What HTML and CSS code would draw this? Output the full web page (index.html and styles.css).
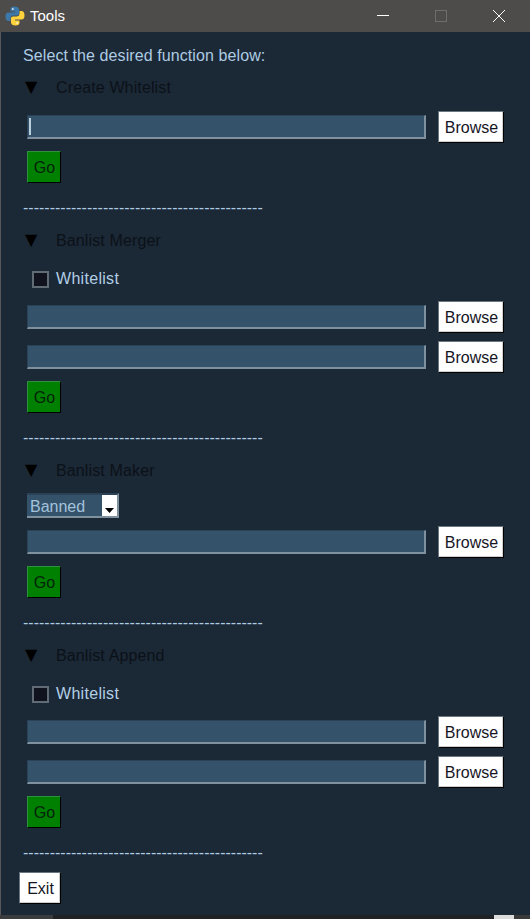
FILE: index.html
```html
<!DOCTYPE html>
<html lang="en">
<head>
<meta charset="utf-8">
<title>Tools</title>
<link rel="stylesheet" href="styles.css">
</head>
<body>
<div class="window">
  <header class="titlebar">
    <svg class="app-icon" width="20" height="20" viewBox="0 0 20 20">
      <path fill="#3c78aa" d="M9.5 0.5C6.5 0.5 5.5 1.8 5.5 3.5V5.5H10V6.5H3.5C1.5 6.5 0.5 8 0.5 10.5S1.5 15 3.5 15H5.5V12.5C5.5 10.8 6.8 9.5 8.5 9.5H12C13.2 9.5 14 8.6 14 7.5V3.5C14 1.5 12 0.5 9.5 0.5Z"/>
      <path fill="#fdd23c" d="M10.5 19.5C13.5 19.5 14.5 18.2 14.5 16.5V14.5H10V13.5H16.5C18.5 13.5 19.5 12 19.5 9.5S18.5 5 16.5 5H14.5V7.5C14.5 9.2 13.2 10.5 11.5 10.5H8C6.800 10.500 6 11.400 6 12.500V16.500C6 18.500 8 19.500 10.500 19.500Z"/>
      <circle cx="7.800" cy="3" r="1" fill="#d8e4ee"/>
      <circle cx="12.200" cy="17" r="1" fill="#fff3c4"/>
    </svg>
    <span class="title">Tools</span>
    <div class="controls">
      <svg class="ctl" width="58" height="32" viewBox="0 0 58 32"><path d="M23 15.500H35" stroke="#fff" fill="none"/></svg>
      <svg class="ctl" width="58" height="32" viewBox="0 0 58 32"><rect x="23.500" y="10.500" width="11" height="11" stroke="#6f6d6b" fill="none"/></svg>
      <svg class="ctl" width="58" height="32" viewBox="0 0 58 32"><path d="M23 10L35 22M35 10L23 22" stroke="#fff" fill="none"/></svg>
    </div>
  </header>
  <main class="content">
    <p class="intro">Select the desired function below:</p>

    <section class="section">
      <h2 class="heading"><span class="arrow">▼</span>Create Whitelist</h2>
      <div class="row top-13"><div class="entry"><span class="caret"></span></div><button class="btn">Browse</button></div>
      <button class="btn go">Go</button>
    </section>
    <div class="sep">---------------------------------------------</div>

    <section class="section">
      <h2 class="heading"><span class="arrow">▼</span>Banlist Merger</h2>
      <label class="check top-17"><span class="box"></span>Whitelist</label>
      <div class="row"><div class="entry"></div><button class="btn">Browse</button></div>
      <div class="row"><div class="entry"></div><button class="btn">Browse</button></div>
      <button class="btn go">Go</button>
    </section>
    <div class="sep">---------------------------------------------</div>

    <section class="section">
      <h2 class="heading"><span class="arrow">▼</span>Banlist Maker</h2>
      <div class="select top-12"><span class="select-text">Banned</span><span class="select-btn"><svg width="9" height="5" viewBox="0 0 9 5"><path d="M0 0H9L4.500 5Z" fill="#000"/></svg></span></div>
      <div class="row"><div class="entry"></div><button class="btn">Browse</button></div>
      <button class="btn go">Go</button>
    </section>
    <div class="sep">---------------------------------------------</div>

    <section class="section">
      <h2 class="heading"><span class="arrow">▼</span>Banlist Append</h2>
      <label class="check top-17"><span class="box"></span>Whitelist</label>
      <div class="row"><div class="entry"></div><button class="btn">Browse</button></div>
      <div class="row"><div class="entry"></div><button class="btn">Browse</button></div>
      <button class="btn go">Go</button>
    </section>
    <div class="sep">---------------------------------------------</div>

    <button class="btn exit">Exit</button>
  </main>
  <div class="strip"><span class="s1"></span><span class="s2"></span><span class="s3"></span><span class="s4"></span></div>
</div>
</body>
</html>
```
FILE: styles.css
```css
* { box-sizing: border-box; }
html, body { margin: 0; padding: 0; }
body {
  width: 530px;
  height: 919px;
  overflow: hidden;
  font-family: "Liberation Sans", Arial, sans-serif;
  font-size: 16px;
  background: #1b2836;
}
.window { display: flex; flex-direction: column; height: 919px; border-left: 1px solid #55575a; }
.titlebar {
  flex: none;
  height: 32px;
  margin-left: -1px;
  background: #4e4c4a;
  display: flex;
  align-items: center;
  padding-left: 5px;
  color: #fff;
}
.app-icon { flex: none; margin-top: -1px; }
.title { margin-left: 5px; font-size: 15px; padding-bottom: 1px; }
.controls { margin-left: auto; display: flex; margin-right: 2px; }
.ctl { display: block; }
.content { flex: 1; padding-top: 12px; padding-left: 22px; min-height: 0; }
.intro { margin: 0; height: 22px; line-height: 23px; color: #adcbe2; letter-spacing: 0.09px; }
.section { display: flex; flex-direction: column; align-items: flex-start; gap: 8px; padding-left: 4px; margin-top: 10px; }
.heading { margin: 0 0 -8px -4px; height: 22px; line-height: 24px; font-size: 16px; font-weight: 400; color: #0b1118; display: flex; letter-spacing: 0.13px; }
.arrow { width: 33px; margin-left: 2px; margin-right: -2px; font-size: 16px; line-height: 22px; color: #000; font-family: "DejaVu Sans", sans-serif; letter-spacing: 0; }
.row { display: flex; align-items: center; gap: 12px; }
.top-12 { margin-top: 12px; }
.top-13 { margin-top: 13px; }
.top-17 { margin-top: 17px; }
.entry {
  width: 399px;
  height: 24px;
  background: #34526a;
  border-right: 2px solid #7f919f;
  border-bottom: 2px solid #7f919f;
  border-top: 1px solid #2b4256;
  border-left: 1px solid #2b4256;
  padding: 2px 0 0 1px;
}
.caret { display: block; width: 2px; height: 17px; background: #b9cfdd; }
.btn {
  margin: 0;
  width: 66px;
  height: 32px;
  padding: 2px 0 0 1px;
  font: inherit;
  color: #15151f;
  background: #fff;
  border: 1px solid;
  border-color: #6a7680 #000 #000 #6a7680;
  box-shadow: inset -1px -1px 0 #cfcfcf;
}
.go { width: 34px; background: #008000; color: #04240a; border-color: #2f8f3f #000 #000 #2f8f3f; box-shadow: none; }
.exit { width: 42px; margin-left: -4px; margin-top: 8px; display: block; }
.sep { margin-top: 14px; height: 22px; line-height: 22px; color: #adcbe2; white-space: nowrap; }
.check { display: flex; align-items: center; height: 22px; color: #b2cfe6; padding-left: 5px; margin-bottom: 3px; letter-spacing: 0.3px; }
.box { width: 17px; height: 17px; background: #10121e; border: 2px solid #606b75; margin-right: 7px; }
.select {
  width: 92px;
  height: 25px;
  background: #34526a;
  border-top: 2px solid #2b4256;
  border-right: 2px solid #7f919f;
  border-bottom: 2px solid #7f919f;
  display: flex;
  justify-content: space-between;
  padding-left: 3px;
  color: #a3c3dc;
  line-height: 23px;
}
.select-btn { width: 15px; height: 21px; background: #fff; display: flex; align-items: flex-end; justify-content: center; padding-bottom: 3px; }
.select-btn svg { display: block; }
.strip { flex: none; height: 4px; margin-left: -1px; display: flex; }
.strip span { display: block; }
.s1 { width: 53px; background: #3a3c3e; }
.s2 { width: 441px; background: #1f2326; }
.s3 { width: 20px; background: #dcdcdc; }
.s4 { flex: 1; background: #3a3a3a; }
```
